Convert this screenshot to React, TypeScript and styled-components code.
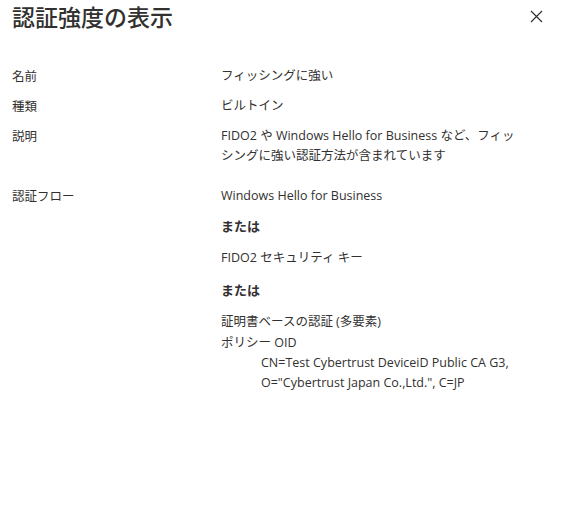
import styled, { createGlobalStyle } from 'styled-components'

const GlobalStyle = createGlobalStyle`
    html, body {
        margin: 0;
        padding: 0;
        background: #ffffff;
    }
    body {
        font-family: "Open Sans", "Noto Sans CJK JP", sans-serif;
        color: #323130;
    }
`

const Panel = styled.div`
    width: 576px;
    height: 526px;
    box-sizing: border-box;
    padding: 0 12px;
    background: #ffffff;
`

const Header = styled.div`
    display: flex;
    align-items: flex-start;
    justify-content: space-between;
    height: 66px;
`

const Title = styled.h1`
    margin: 0;
    padding-top: 1px;
    font-family: "Noto Sans CJK JP", sans-serif;
    font-size: 23px;
    font-weight: 500;
    line-height: 30px;
    color: #323130;
`

const CloseButton = styled.button`
    display: flex;
    align-items: center;
    justify-content: center;
    width: 32px;
    height: 32px;
    margin: 0 12px 0 0;
    padding: 0;
    border: none;
    background: transparent;
    color: #323130;
    cursor: pointer;
`

const Details = styled.div`
    display: flex;
    flex-direction: column;
`

const Row = styled.div<{ $space?: number }>`
    display: grid;
    grid-template-columns: 209px 1fr;
    font-size: 12.5px;
    line-height: 20px;
    margin-bottom: ${p => p.$space ?? 10}px;
`

const Label = styled.div`
    font-family: "Noto Sans CJK JP", sans-serif;
    font-size: 12.5px;
`

const Value = styled.div`
    display: flex;
    flex-direction: column;
`

const FlowItem = styled.div<{ $indent?: boolean; $gap?: number }>`
    padding-left: ${p => (p.$indent ? 40 : 0)}px;
    margin-bottom: ${p => p.$gap ?? 0}px;
`

const OrText = styled.div`
    font-family: "Noto Sans CJK JP", sans-serif;
    font-weight: 700;
    font-size: 13px;
    margin-bottom: 12px;
`

const CloseIcon = () => (
    <svg width="13" height="13" viewBox="0 0 13 13" fill="none">
        <path d="M1 1L12 12M12 1L1 12" stroke="#323130" strokeWidth="1.2" />
    </svg>
)

const App = () => {
    return (
        <Panel>
            <GlobalStyle />
            <Header>
                <Title>認証強度の表示</Title>
                <CloseButton aria-label="閉じる">
                    <CloseIcon />
                </CloseButton>
            </Header>
            <Details>
                <Row>
                    <Label>名前</Label>
                    <Value>フィッシングに強い</Value>
                </Row>
                <Row>
                    <Label>種類</Label>
                    <Value>ビルトイン</Value>
                </Row>
                <Row $space={20}>
                    <Label>説明</Label>
                    <Value>
                        <div>FIDO2 や Windows Hello for Business など、フィッ</div>
                        <div>シングに強い認証方法が含まれています</div>
                    </Value>
                </Row>
                <Row>
                    <Label>認証フロー</Label>
                    <Value>
                        <FlowItem $gap={10}>Windows Hello for Business</FlowItem>
                        <OrText>または</OrText>
                        <FlowItem $gap={12}>FIDO2 セキュリティ キー</FlowItem>
                        <OrText>または</OrText>
                        <FlowItem $gap={1}>証明書ベースの認証 (多要素)</FlowItem>
                        <FlowItem>ポリシー OID</FlowItem>
                        <FlowItem $indent>CN=Test Cybertrust DeviceiD Public CA G3,</FlowItem>
                        <FlowItem $indent>O="Cybertrust Japan Co.,Ltd.", C=JP</FlowItem>
                    </Value>
                </Row>
            </Details>
        </Panel>
    )
}

export default App
